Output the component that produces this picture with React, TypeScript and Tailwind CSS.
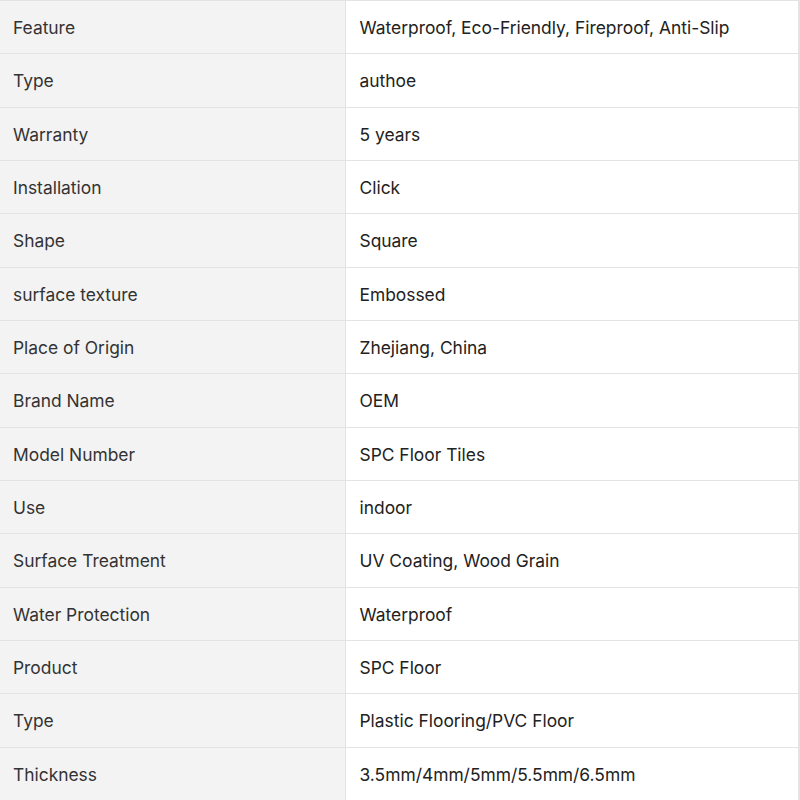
const specs: [string, string][] = [
  ['Feature', 'Waterproof, Eco-Friendly, Fireproof, Anti-Slip'],
  ['Type', 'authoe'],
  ['Warranty', '5 years'],
  ['Installation', 'Click'],
  ['Shape', 'Square'],
  ['surface texture', 'Embossed'],
  ['Place of Origin', 'Zhejiang, China'],
  ['Brand Name', 'OEM'],
  ['Model Number', 'SPC Floor Tiles'],
  ['Use', 'indoor'],
  ['Surface Treatment', 'UV Coating, Wood Grain'],
  ['Water Protection', 'Waterproof'],
  ['Product', 'SPC Floor'],
  ['Type', 'Plastic Flooring/PVC Floor'],
  ['Thickness', '3.5mm/4mm/5mm/5.5mm/6.5mm'],
];

export default function App() {
  return (
    <div className="w-[800px] h-[800px] overflow-hidden bg-white font-['Inter',sans-serif]">
      <table className="w-[800px] border-collapse table-fixed text-[17.4px]">
        <tbody>
          {specs.map(([label, value], i) => (
            <tr key={i} className="h-[53.33px]">
              <td className="w-[345px] border border-l-0 border-[#e3e3e3] bg-[#f3f3f3] pl-[13px] pr-[12px] pt-[2px] text-[#333333] align-middle">
                {label}
              </td>
              <td className="border border-[#e3e3e3] border-r-2 bg-white pl-[14px] pr-[13px] pt-[2px] text-[#222222] align-middle">
                {value}
              </td>
            </tr>
          ))}
        </tbody>
      </table>
    </div>
  );
}
